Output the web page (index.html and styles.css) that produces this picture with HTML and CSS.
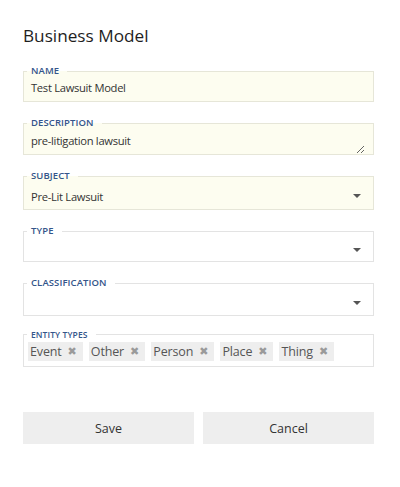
FILE: index.html
```html
<!DOCTYPE html>
<html>
<head>
<meta charset="utf-8">
<link rel="stylesheet" href="styles.css">
</head>
<body>
<div class="dialog">
  <h1 class="title">Business Model</h1>

  <fieldset class="field filled f-name">
    <legend>Name</legend>
    <div class="value">Test Lawsuit Model</div>
  </fieldset>

  <fieldset class="field filled f-desc">
    <legend>Description</legend>
    <textarea class="area">pre-litigation lawsuit</textarea>
  </fieldset>

  <fieldset class="field filled f-subject">
    <legend>Subject</legend>
    <div class="select"><span class="value">Pre-Lit Lawsuit</span><span class="caret"></span></div>
  </fieldset>

  <fieldset class="field f-type">
    <legend>Type</legend>
    <div class="select"><span class="value"></span><span class="caret"></span></div>
  </fieldset>

  <fieldset class="field f-class">
    <legend>Classification</legend>
    <div class="select"><span class="value"></span><span class="caret"></span></div>
  </fieldset>

  <fieldset class="field f-entity">
    <legend class="small">Entity Types</legend>
    <div class="tags">
      <span class="tag">Event<span class="x">✖</span></span>
      <span class="tag">Other<span class="x">✖</span></span>
      <span class="tag">Person<span class="x">✖</span></span>
      <span class="tag">Place<span class="x">✖</span></span>
      <span class="tag">Thing<span class="x">✖</span></span>
    </div>
  </fieldset>

  <div class="actions">
    <button class="btn">Save</button>
    <button class="btn">Cancel</button>
  </div>
</div>
</body>
</html>
```

FILE: styles.css
```css
html, body {
  margin: 0;
  padding: 0;
  background: #ffffff;
}
body {
  font-family: "Open Sans", "Noto Sans", sans-serif;
  color: #333333;
}
.dialog {
  padding: 0 26px 0 23px;
  width: 351px;
}
.title {
  margin: 0;
  padding-top: 24px;
  height: 42px;
  font-size: 17.2px;
  line-height: 24px;
  font-weight: 400;
  color: #1e1e1e;
}
.field {
  margin: 0 0 16px 0;
  padding: 0 8px 0 3px;
  border: 1px solid #e3e3e3;
  min-width: 0;
  background: #ffffff;
}
.field.filled {
  background: #fdfdf0;
  border-color: #e6e6d8;
}
.field legend {
  padding: 0 8px 0 4px;
  font-size: 9.5px;
  line-height: 10px;
  font-weight: 600;
  text-transform: uppercase;
  color: #34558a;
  letter-spacing: 0.1px;
}
.field legend.small {
  font-size: 8.5px;
  line-height: 9px;
}
.value {
  display: block;
  padding-left: 4px;
  font-size: 11.2px;
  line-height: 14px;
  letter-spacing: -0.3px;
  color: #333333;
}
.f-name .value {
  height: 25px;
  padding-top: 5px;
  box-sizing: border-box;
}
.f-desc .area {
  display: block;
  width: 100%;
  height: 26px;
  margin: 0;
  padding: 6px 4px 0 4px;
  box-sizing: border-box;
  border: none;
  outline: none;
  background: transparent;
  font-family: "Open Sans", "Noto Sans", sans-serif;
  font-size: 11.2px;
  line-height: 14px;
  letter-spacing: -0.3px;
  color: #333333;
  resize: vertical;
  overflow: hidden;
}
.select {
  display: flex;
  align-items: center;
  justify-content: space-between;
  padding-right: 4px;
}
.select .value {
  padding-top: 4px;
}
.f-subject .select { height: 28px; }
.f-type .select { height: 25px; }
.f-class .select { height: 27px; }
.f-class { margin-bottom: 14px; }
.caret {
  width: 0;
  height: 0;
  border-left: 4px solid transparent;
  border-right: 4px solid transparent;
  border-top: 4px solid #555555;
  margin-top: 2px;
}
.tags {
  display: flex;
  gap: 6px;
  height: 27px;
  padding-top: 3px;
  box-sizing: border-box;
  margin-left: 1px;
}
.tag {
  display: inline-flex;
  align-items: center;
  height: 19px;
  padding: 0 6px 0 2px;
  background: #eeeeee;
  font-size: 12.5px;
  letter-spacing: -0.15px;
  color: #555555;
}
.tag .x {
  margin-left: 6px;
  font-family: "DejaVu Sans", sans-serif;
  font-size: 11px;
  letter-spacing: 0;
  color: #9a9a9a;
}
.actions {
  display: flex;
  gap: 9px;
  margin-top: 45px;
}
.btn {
  flex: 1;
  height: 32px;
  border: none;
  background: #eeeeee;
  font-family: "Open Sans", "Noto Sans", sans-serif;
  font-size: 12.5px;
  color: #333333;
  padding: 0;
}
```
